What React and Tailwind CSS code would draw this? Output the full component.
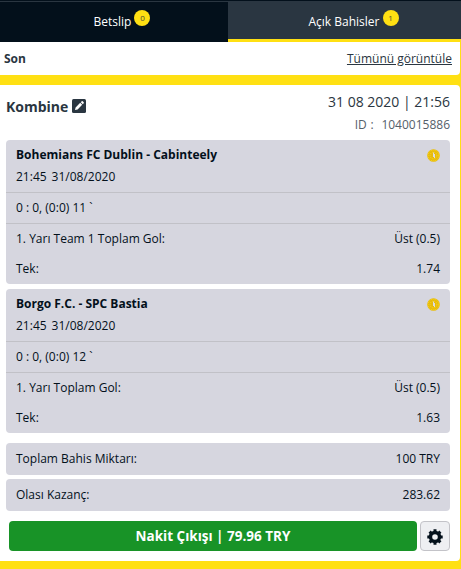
const selections = [
    { id: 1, teams: 'Bohemians FC Dublin - Cabinteely', time: '21:45', date: '31/08/2020', score: '0 : 0, (0:0) 11 `', market: '1. Yarı Team 1 Toplam Gol:', pick: 'Üst (0.5)', odds: '1.74' },
    { id: 2, teams: 'Borgo F.C. - SPC Bastia', time: '21:45', date: '31/08/2020', score: '0 : 0, (0:0) 12 `', market: '1. Yarı Toplam Gol:', pick: 'Üst (0.5)', odds: '1.63' },
];

const totals = [
    { label: 'Toplam Bahis Miktarı:', value: '100 TRY' },
    { label: 'Olası Kazanç:', value: '283.62' },
];

function Badge({ children }) {
    return (
        <span className="ml-[3px] h-4 w-4 rounded-full bg-[#ffe013] text-center text-[8px] leading-4 text-[#4a4a35]">{children}</span>
    );
}

function LiveCoin() {
    return (
        <svg width="13" height="13" viewBox="0 0 13 13">
            <circle cx="6.5" cy="6.5" r="6.3" fill="#e6b90f" />
            <circle cx="6.5" cy="6.5" r="5.4" fill="none" stroke="#ffdf1a" strokeWidth="1" strokeDasharray="1 1" />
            <circle cx="6.5" cy="6.5" r="3.4" fill="none" stroke="#ffdf1a" strokeWidth="1" strokeDasharray="1 1" />
            <path d="M6.5 3.5v4.5M7.5 5v4" fill="none" stroke="#dcdce0" strokeWidth="1" />
        </svg>
    );
}

function EditIcon() {
    return (
        <svg width="14" height="14" viewBox="0 0 14 14" className="mb-0.5 ml-px">
            <rect width="14" height="14" rx="1.5" fill="#2a3641" />
            <path d="M3 11l.6-2.6 4.6-4.6 2 2-4.6 4.6z M8.8 3.2l.9-.9q.5-.4 1 0l1 1q.4.5 0 1l-.9.9z" fill="#fff" />
        </svg>
    );
}

function Gear() {
    return (
        <svg width="16" height="16" viewBox="0 0 16 16" fill="none" stroke="#03101b">
            <circle cx="8" cy="8" r="4.5" strokeWidth="3.4" />
            <path d="M8 .3v3M8 12.7v3M.3 8h3M12.7 8h3M2.6 2.6l2 2M11.4 11.4l2 2M2.6 13.4l2-2M11.4 4.6l2-2" strokeWidth="3" />
        </svg>
    );
}

function Row({ label, value }) {
    return (
        <div className="flex h-[30px] items-center justify-between px-2.5">
            <span>{label}</span>
            <span>{value}</span>
        </div>
    );
}

function Selection({ item }) {
    return (
        <div className="h-36 rounded bg-[#d6d6df]">
            <div className="h-[53px] border-b border-[#c1c1c7] px-2.5 pt-1 leading-[22px]">
                <div className="flex items-center justify-between">
                    <span className="font-bold">{item.teams}</span>
                    <LiveCoin />
                </div>
                <div className="flex gap-[5px]">
                    <span>{item.time}</span>
                    <span>{item.date}</span>
                </div>
            </div>
            <div className="h-[31px] border-b border-[#c1c1c7] px-2.5 leading-[30px]">{item.score}</div>
            <Row label={item.market} value={item.pick} />
            <Row label="Tek:" value={item.odds} />
        </div>
    );
}

export default function App() {
    return (
        <div className="h-[569px] w-[461px] overflow-hidden bg-[#ffe013] pr-px font-['Open_Sans','Noto_Sans',sans-serif] text-xs text-[#03101b]">
            <div className="-mr-px flex h-[42px] border-t border-[#03101b] bg-[#03101b] text-white">
                <button className="flex w-[228px] items-start justify-center border-t border-[#2a3641] pl-4 pt-2">
                    <span className="pt-1">Betslip</span>
                    <Badge>0</Badge>
                </button>
                <button className="flex flex-1 items-start justify-center border-b-3 border-[#ffe013] bg-[#2a3641] pl-[18px] pt-[9px]">
                    <span className="pt-1">Açık Bahisler</span>
                    <Badge>1</Badge>
                </button>
            </div>

            <div className="flex h-[33px] items-center justify-between rounded-br bg-white pl-1 pr-2 text-[#2a3641]">
                <span className="font-bold">Son</span>
                <a href="#" className="underline">Tümünü görüntüle</a>
            </div>

            <div className="mt-2.5 h-[476px] rounded-r bg-white pl-1.5 pr-2.5 pt-1.5">
                <div className="flex h-[49px] justify-between text-[#2a3641]">
                    <h2 className="flex h-[31px] items-center gap-[3px] text-sm font-bold">
                        Kombine
                        <EditIcon />
                    </h2>
                    <div className="text-right">
                        <p className="text-sm leading-[22px]">31 08 2020 | 21:56</p>
                        <p className="leading-[23px] text-[#55606a] [word-spacing:0.7px]">ID :&nbsp; 1040015886</p>
                    </div>
                </div>

                <div className="flex flex-col gap-[5px]">
                    {selections.map((item) => <Selection key={item.id} item={item} />)}
                </div>

                <div className="mt-2.5 flex flex-col gap-1">
                    {totals.map((t) => (
                        <div key={t.label} className="rounded bg-[#d6d6df] py-px">
                            <Row label={t.label} value={t.value} />
                        </div>
                    ))}
                </div>

                <div className="mt-2.5 flex gap-[3px] pl-[3px]">
                    <button className="h-[30px] flex-1 rounded bg-[#189327] text-[13.5px] font-bold text-white">Nakit Çıkışı | 79.96 TRY</button>
                    <button className="flex h-[30px] w-[30px] items-center justify-center rounded border border-[#c3c3c8] bg-[#eeeff2] pt-0.5">
                        <Gear />
                    </button>
                </div>
            </div>
        </div>
    );
}
